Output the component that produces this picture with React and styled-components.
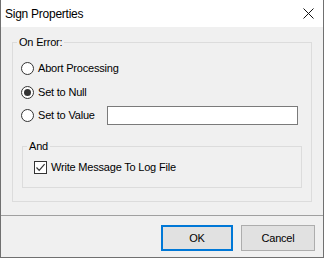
import React from 'react';
import styled, { createGlobalStyle } from 'styled-components';

const Global = createGlobalStyle`
  * { box-sizing: border-box; }
  html, body { margin: 0; padding: 0; background: #ffffff; }
  body {
    font-family: "Liberation Sans", Arial, sans-serif;
    color: #000;
  }
`;

const Window = styled.div`
  width: 324px;
  height: 258px;
  display: flex;
  flex-direction: column;
  border: 1px solid #707070;
  border-top: none;
  background: #f0f0f0;
`;

const TitleBar = styled.div`
  flex: none;
  height: 27px;
  background: #ffffff;
  display: flex;
  align-items: center;
  justify-content: space-between;
  padding: 0 9px 0 4px;
`;

const Title = styled.span`
  font-size: 12px;
  letter-spacing: -0.25px;
  line-height: 14px;
`;

const CloseIcon = styled.svg`
  width: 11px;
  height: 11px;
  display: block;
`;

const Body = styled.div`
  flex: 1;
  display: flex;
  flex-direction: column;
  font-size: 11px;
  letter-spacing: -0.2px;
`;

const Content = styled.div`
  padding: 15px 11px 0;
`;

const GroupBox = styled.div`
  position: relative;
  border: 1px solid #dcdcdc;
  height: ${p => p.$h}px;
  margin: ${p => p.$m || '0'};
  padding: ${p => p.$p || '0'};
`;

const Caption = styled.span`
  position: absolute;
  top: -7px;
  left: 4px;
  padding: 0 2px;
  line-height: 13px;
  background: #f0f0f0;
`;

const OptionRow = styled.div`
  display: flex;
  align-items: center;
  height: ${p => p.$h || 24}px;
  gap: 4px;
`;

const Radio = styled.span`
  flex: none;
  width: 13px;
  height: 13px;
  border-radius: 50%;
  border: 1px solid #333;
  background: #fff;
  display: flex;
  align-items: center;
  justify-content: center;
  &::after {
    content: '';
    width: 7px;
    height: 7px;
    border-radius: 50%;
    background: ${p => (p.$checked ? '#333' : 'transparent')};
  }
`;

const Label = styled.span`
  line-height: 13px;
  white-space: nowrap;
`;

const TextBox = styled.div`
  margin-left: ${p => p.$ml}px;
  width: 191px;
  height: 19px;
  border: 1px solid #7a7a7a;
  background: #fff;
`;

const CheckBox = styled.span`
  flex: none;
  width: 13px;
  height: 13px;
  border: 1px solid #333;
  background: #fff;
  display: flex;
  align-items: center;
  justify-content: center;
`;

const Separator = styled.div`
  margin-top: 13px;
  height: 1px;
  background: #a0a0a0;
`;

const ButtonBar = styled.div`
  flex: 1;
  display: flex;
  justify-content: flex-end;
  align-items: flex-start;
  gap: 8px;
  padding: 9px 8px 0 0;
`;

const Button = styled.button`
  width: ${p => p.$w}px;
  height: 26px;
  margin: 0;
  padding: 0;
  font-family: "Liberation Sans", Arial, sans-serif;
  font-size: 11px;
  letter-spacing: -0.2px;
  color: #000;
  background: #e1e1e1;
  border: ${p => (p.$default ? '2px solid #0078d7' : '1px solid #adadad')};
`;

export default function App() {
  return (
    <>
      <Global />
      <Window>
        <TitleBar>
          <Title>Sign Properties</Title>
          <CloseIcon viewBox="0 0 11 11">
            <path d="M0.5 0.5 L10.5 10.5 M10.5 0.5 L0.5 10.5" stroke="#111" strokeWidth="1" fill="none" />
          </CloseIcon>
        </TitleBar>
        <Body>
          <Content>
            <GroupBox $h={160} $p="13px 8px 0">
              <Caption>On Error:</Caption>
              <OptionRow>
                <Radio />
                <Label>Abort Processing</Label>
              </OptionRow>
              <OptionRow>
                <Radio $checked />
                <Label>Set to Null</Label>
              </OptionRow>
              <OptionRow $h={22}>
                <Radio />
                <Label>Set to Value</Label>
                <TextBox $ml={8} />
              </OptionRow>
              <GroupBox $h={42} $m="20px 1px 0" $p="10px 11px 0">
                <Caption>And</Caption>
                <OptionRow $h={20}>
                  <CheckBox>
                    <svg width="11" height="11" viewBox="0 0 11 11">
                      <path d="M1.5 5.5 L4.2 8.3 L9.6 2.2" stroke="#333" strokeWidth="1.2" fill="none" />
                    </svg>
                  </CheckBox>
                  <Label>Write Message To Log File</Label>
                </OptionRow>
              </GroupBox>
            </GroupBox>
          </Content>
          <Separator />
          <ButtonBar>
            <Button $w={72} $default>OK</Button>
            <Button $w={74}>Cancel</Button>
          </ButtonBar>
        </Body>
      </Window>
    </>
  );
}
